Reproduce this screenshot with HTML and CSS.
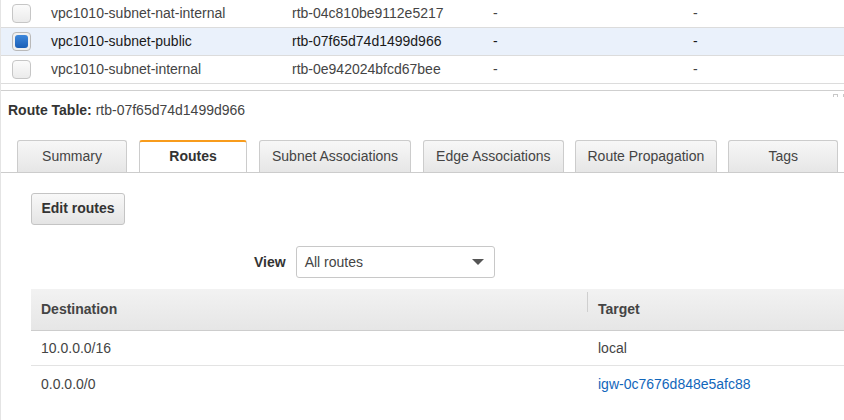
FILE: index.html
```html
<!DOCTYPE html>
<html>
<head>
<meta charset="utf-8">
<link rel="stylesheet" href="styles.css">
</head>
<body>
<div class="page">
  <div class="list">
    <div class="row">
      <div class="c-cb"><span class="cb"></span></div>
      <div class="c-name">vpc1010-subnet-nat-internal</div>
      <div class="c-rtb">rtb-04c810be9112e5217</div>
      <div class="c-a">-</div>
      <div class="c-b">-</div>
    </div>
    <div class="row selected">
      <div class="c-cb"><span class="cb checked"></span></div>
      <div class="c-name">vpc1010-subnet-public</div>
      <div class="c-rtb">rtb-07f65d74d1499d966</div>
      <div class="c-a">-</div>
      <div class="c-b">-</div>
    </div>
    <div class="row">
      <div class="c-cb"><span class="cb"></span></div>
      <div class="c-name">vpc1010-subnet-internal</div>
      <div class="c-rtb">rtb-0e942024bfcd67bee</div>
      <div class="c-a">-</div>
      <div class="c-b">-</div>
    </div>
  </div>

  <div class="detail">
    <div class="handle"><span class="h1"></span><span class="h2"></span></div>
    <div class="title"><span class="title-label">Route Table:</span> rtb-07f65d74d1499d966</div>
    <div class="tabs">
      <div class="tab">Summary</div>
      <div class="tab active">Routes</div>
      <div class="tab">Subnet Associations</div>
      <div class="tab">Edge Associations</div>
      <div class="tab tight">Route Propagation</div>
      <div class="tab tight">Tags</div>
    </div>
    <div class="content">
      <div class="btn-row"><button class="btn">Edit routes</button></div>
      <div class="view">
        <span class="view-label">View</span>
        <div class="select">
          <span>All routes</span>
          <span class="caret"></span>
        </div>
      </div>
      <div class="table">
        <div class="thead">
          <div class="th col1">Destination</div>
          <div class="th col2"><span class="sep"></span>Target</div>
        </div>
        <div class="tr">
          <div class="td col1">10.0.0.0/16</div>
          <div class="td col2">local</div>
        </div>
        <div class="tr">
          <div class="td col1">0.0.0.0/0</div>
          <div class="td col2"><a class="link" href="#">igw-0c7676d848e5afc88</a></div>
        </div>
      </div>
    </div>
  </div>
</div>
</body>
</html>
```

FILE: styles.css
```css
* { box-sizing: border-box; }
html, body {
  margin: 0;
  padding: 0;
  background: #fff;
}
body {
  font-family: "Liberation Sans", Arial, sans-serif;
  font-size: 14px;
  color: #444;
  width: 844px;
  height: 420px;
  overflow: hidden;
}
.page {
  border-left: 1px solid #e4e4e4;
  min-height: 420px;
}

/* top list */
.row {
  display: grid;
  grid-template-columns: 50px 241px 201px 200px 1fr;
  height: 28px;
  align-items: center;
  border-bottom: 1px solid #dcdcdc;
  color: #444;
  padding-bottom: 1px;
}
.row.selected {
  background: #eaf1fb;
  color: #1a1a1a;
}
.c-cb {
  padding-left: 11px;
  display: flex;
  align-items: center;
}
.cb {
  display: block;
  width: 19px;
  height: 19px;
  border: 1px solid #c6c6c6;
  border-radius: 4px;
  background: linear-gradient(#fbfbfb, #ebebeb);
  position: relative;
}
.cb.checked {
  background: #f0f0f0;
  border-color: #b9b9b9;
}
.cb.checked::after {
  content: "";
  position: absolute;
  left: 2px;
  top: 2px;
  width: 13px;
  height: 13px;
  border-radius: 3px;
  background: linear-gradient(#3d87db, #1b5fb6);
}

/* detail panel */
.detail {
  margin-top: 6px;
  border-top: 1px solid #cfcfcf;
  position: relative;
}
.handle {
  position: absolute;
  right: 0;
  top: 3px;
  display: flex;
  gap: 5px;
}
.handle .h1 {
  width: 5px;
  height: 3px;
  border: 1px solid #c8c8c8;
  border-bottom: none;
}
.handle .h2 {
  width: 1px;
  height: 3px;
  background: #c8c8c8;
}
.title {
  padding: 10px 7px 0;
  line-height: 18px;
  height: 49px;
  color: #444;
}
.title-label {
  font-weight: bold;
  color: #333;
}

.tabs {
  display: flex;
  gap: 12px;
  padding-left: 16px;
  border-bottom: 1px solid #cccccc;
  height: 33px;
}
.tab {
  min-width: 110px;
  height: 32px;
  padding: 0 12px 2px;
  border: 1px solid #cccccc;
  border-bottom: none;
  border-radius: 3px 3px 0 0;
  background: linear-gradient(#f7f7f7, #e6e6e6);
  display: flex;
  align-items: center;
  justify-content: center;
  color: #444;
  white-space: nowrap;
}
.tab.tight {
  margin-left: -1px;
}
.tab.active {
  min-width: 108px;
  background: #fff;
  border-top: 2px solid #f89c1c;
  font-weight: bold;
  color: #333;
  padding-bottom: 2px;
}

.content {
  padding: 20px 0 0 30px;
}
.btn-row {
  height: 32px;
}
.btn {
  font-family: inherit;
  font-size: 14px;
  font-weight: bold;
  color: #333;
  height: 32px;
  width: 94px;
  padding: 0 0 2px;
  border: 1px solid #c4c4c4;
  border-radius: 3px;
  background: linear-gradient(#f8f8f8, #e4e4e4);
}
.view {
  margin-top: 21px;
  margin-left: 223px;
  display: flex;
  align-items: center;
  gap: 10px;
  height: 32px;
}
.view-label {
  font-weight: bold;
  color: #333;
}
.select {
  width: 199px;
  height: 32px;
  border: 1px solid #c8c8c8;
  border-radius: 3px;
  display: flex;
  align-items: center;
  justify-content: space-between;
  padding: 0 10px 0 8px;
  color: #444;
}
.caret {
  width: 0;
  height: 0;
  border-left: 6px solid transparent;
  border-right: 6px solid transparent;
  border-top: 6px solid #555;
}

.table {
  margin-top: 11px;
}
.thead {
  display: flex;
  height: 42px;
  align-items: center;
  padding-bottom: 2px;
  background: linear-gradient(#f2f2f2, #e6e6e6);
  border-bottom: 1px solid #cdcdcd;
  font-weight: bold;
  color: #444;
}
.col1 {
  width: 556px;
  padding-left: 10px;
}
.col2 {
  flex: 1;
  padding-left: 11px;
  position: relative;
}
.sep {
  position: absolute;
  left: 0;
  top: -9px;
  width: 1px;
  height: 20px;
  background: #cfcfcf;
}
.tr {
  display: flex;
  align-items: center;
  height: 35px;
  border-bottom: 1px solid #e3e3e3;
  color: #444;
}
.tr:last-child {
  border-bottom: none;
}
.link {
  color: #1166bb;
  text-decoration: none;
}
```
